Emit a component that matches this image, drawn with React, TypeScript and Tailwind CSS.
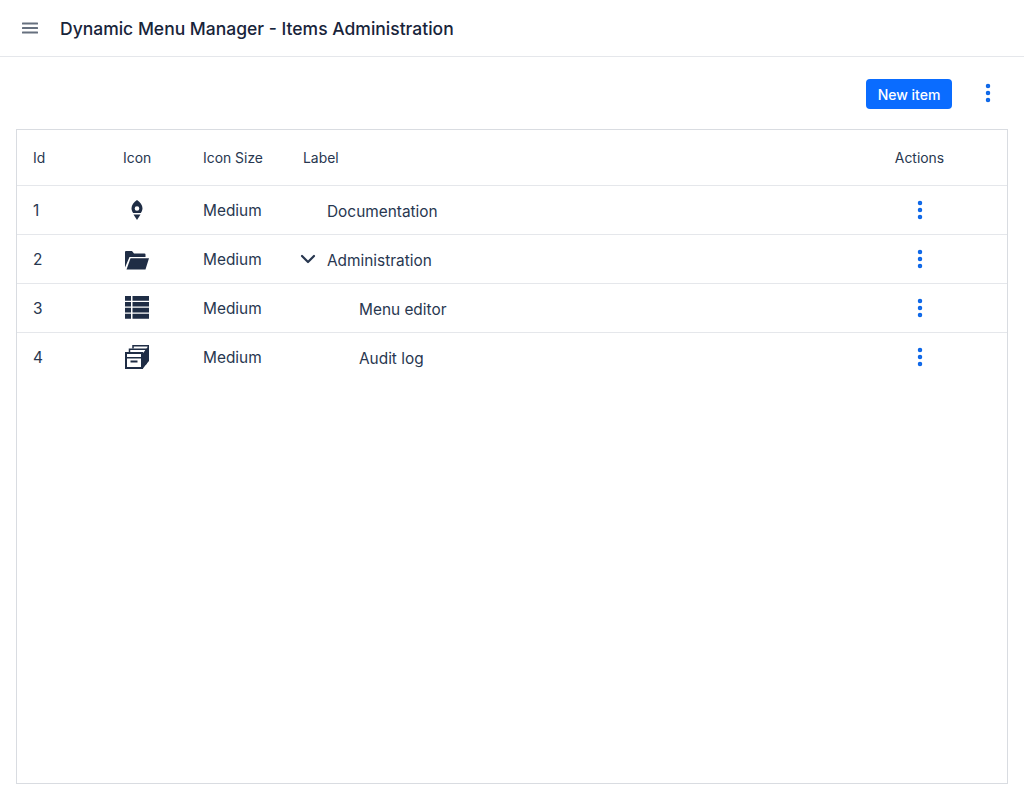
import { ChevronDown, EllipsisVertical } from "lucide-react";
import type { ReactNode } from "react";

const columns = "grid grid-cols-[90px_80px_100px_1fr_175px]";

function HamburgerIcon() {
  return (
    <svg viewBox="0 0 16 12" className="h-3 w-4 text-[#66707f]" fill="currentColor">
      <rect x="0" y="0.5" width="16" height="2" rx="0.5" />
      <rect x="0" y="5" width="16" height="2" rx="0.5" />
      <rect x="0" y="9.5" width="16" height="2" rx="0.5" />
    </svg>
  );
}

function RocketIcon() {
  return (
    <svg viewBox="0 0 24 24" className="h-6 w-6 text-[#1f2d45]" fill="currentColor">
      <path
        fillRule="evenodd"
        d="M12 2c3.200 2.200 5.500 5 5.500 8.200 0 1.900-.7 3.300-1.700 4.800H8.200c-1-1.500-1.700-2.900-1.700-4.800C6.500 7 8.800 4.200 12 2Zm0 6.200a2.300 2.300 0 1 0 0 4.600 2.300 2.300 0 0 0 0-4.600Z"
      />
      <path d="M8.500 16.500h7L12 22Z" />
    </svg>
  );
}

function FolderIcon() {
  return (
    <svg viewBox="0 0 24 24" className="h-6 w-6 text-[#1f2d45]" fill="currentColor">
      <path d="M0 20.500V5a1 1 0 0 1 1-1h6l2 2.500h10.500a1 1 0 0 1 1 1V10H4.500Z" />
      <path d="M5.500 11.300H24l-3.500 11.200H1.500Z" />
    </svg>
  );
}

function TableIcon() {
  return (
    <svg viewBox="0 0 24 24" className="h-6 w-6 text-[#1f2d45]" fill="currentColor">
      <path d="M0 0h6v4.700H0ZM7.500 0H24v4.700H7.500ZM0 5.900h6v4.700H0ZM7.500 5.900H24v4.700H7.500ZM0 11.800h6v4.700H0ZM7.500 11.800H24v4.700H7.500ZM0 17.800h6v5H0ZM7.500 17.800H24v5H7.500Z" />
    </svg>
  );
}

function ArchiveIcon() {
  return (
    <svg viewBox="0 0 24 24" className="h-6 w-6 text-[#1f2d45]" fill="currentColor">
      <path d="M4.500 7.500V4.300h16.500v15" fill="none" stroke="currentColor" strokeWidth="1.500" />
      <path d="M8 3.500V.8h15.300V16" fill="none" stroke="currentColor" strokeWidth="1.500" />
      <path d="M18 8l3-3.500v15L18 23.500Z" />
      <path d="M21 4l3-3v15l-3 3.500Z" />
      <rect x="1" y="8" width="16" height="15" fill="#fff" stroke="currentColor" strokeWidth="2" />
      <path d="M1 12h16v1.500H1ZM5.500 15.500h7v2h-7Z" />
    </svg>
  );
}

function Kebab() {
  return (
    <EllipsisVertical className="h-6 w-6 text-[#0b66e8]" strokeWidth={2.5} />
  );
}

type Row = {
  id: number;
  icon: ReactNode;
  label: string;
  indent: string;
  expanded?: boolean;
};

const rows: Row[] = [
  { id: 1, icon: <RocketIcon />, label: "Documentation", indent: "pl-6" },
  { id: 2, icon: <FolderIcon />, label: "Administration", indent: "pl-6", expanded: true },
  { id: 3, icon: <TableIcon />, label: "Menu editor", indent: "pl-14" },
  { id: 4, icon: <ArchiveIcon />, label: "Audit log", indent: "pl-14" },
];

export default function App() {
  return (
    <div className="flex h-[800px] flex-col bg-white font-['Inter',sans-serif] text-[#283750] antialiased">
      <header className="flex h-[57px] items-center border-b border-[#e5e7eb] pl-[22px]">
        <HamburgerIcon />
        <h1 className="ml-[22px] pt-0.5 text-[17.5px] font-medium text-[#18243a]">
          Dynamic Menu Manager - Items Administration
        </h1>
      </header>

      <div className="flex h-[72px] items-center justify-end pt-0.5 pr-6">
        <button className="h-[30px] w-[86px] rounded bg-[#0a6cff] pt-0.5 text-sm font-medium text-white">
          New item
        </button>
        <span className="ml-6 -mt-0.5">
          <Kebab />
        </span>
      </div>

      <div className="mx-4 mb-4 flex-1 border border-[#d9dce1]">
        <div className={`${columns} h-14 items-center border-b border-[#e5e7eb] pt-px text-[13.9px]`}>
          <span className="pl-4">Id</span>
          <span className="pl-4">Icon</span>
          <span className="pl-4">Icon Size</span>
          <span className="pl-4">Label</span>
          <span className="text-center">Actions</span>
        </div>
        {rows.map((row) => (
          <div
            key={row.id}
            className={`${columns} h-[49px] items-center border-b border-[#e5e7eb] text-[15.4px] last:border-b-transparent`}
          >
            <span className="pt-0.5 pl-4">{row.id}</span>
            <span className="pl-[18px]">{row.icon}</span>
            <span className="pt-0.5 pl-4">Medium</span>
            <span className="relative pt-1 pl-4">
              <span className={`block ${row.indent}`}>{row.label}</span>
              {row.expanded && (
                <ChevronDown
                  className="absolute top-[2px] left-[9px] h-6 w-6"
                  strokeWidth={2.25}
                />
              )}
            </span>
            <span className="flex justify-center">
              <Kebab />
            </span>
          </div>
        ))}
      </div>
    </div>
  );
}
